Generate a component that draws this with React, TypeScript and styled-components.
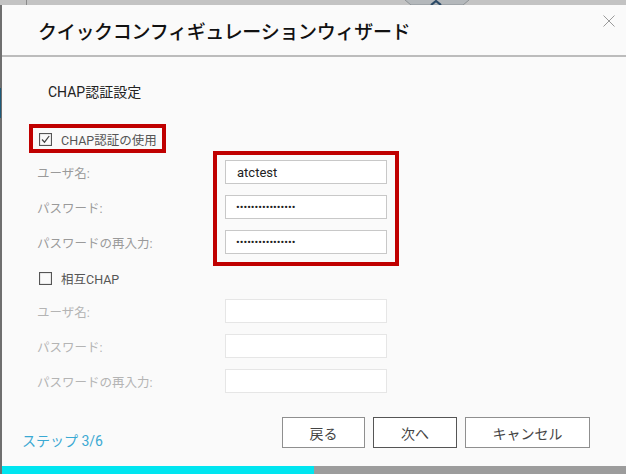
import React from 'react';
import styled, { createGlobalStyle } from 'styled-components';

const GlobalStyle = createGlobalStyle`
    html, body {
        margin: 0;
        padding: 0;
        width: 626px;
        height: 474px;
        overflow: hidden;
    }

    body {
        font-family: Roboto, 'Noto Sans CJK JP', sans-serif;
    }
`;

interface IRowProps {
    disabled?: boolean;
}

interface ICheckProps {
    checked?: boolean;
}

interface IButtonProps {
    primary?: boolean;
}

const chapRows = [
    { label: 'ユーザ名:', value: 'atctest', secret: false },
    { label: 'パスワード:', value: '••••••••••••••••', secret: true },
    { label: 'パスワードの再入力:', value: '••••••••••••••••', secret: true },
];

const mutualRows = ['ユーザ名:', 'パスワード:', 'パスワードの再入力:'];

const CheckBox: React.FC<ICheckProps> = ({ checked }) => (
    <svg width='13' height='13' viewBox='0 0 13 13'>
        <rect x='0.5' y='0.5' width='12' height='12' fill='none' stroke='#555' strokeWidth='1.2' />
        {checked && <path d='M3 6.5 L5.5 9.2 L10.2 3' fill='none' stroke='#444' strokeWidth='1.2' />}
    </svg>
);

const App: React.FC = () => {
    return (
        <Backdrop>
            <GlobalStyle />
            <TopStrip>
                <svg width='70' height='5' viewBox='0 0 70 5'>
                    <path d='M2 0 L8 5 L60 5 L66 0' fill='#b4b8bb' stroke='#8d9296' strokeWidth='1' />
                    <path d='M28 5 L33 1 L38 5' fill='none' stroke='#2b4a66' strokeWidth='2.2' />
                </svg>
            </TopStrip>
            <Dialog>
                <Header>
                    <Title>クイックコンフィギュレーションウィザード</Title>
                    <Close>
                        <svg width='12' height='12' viewBox='0 0 12 12'>
                            <path d='M0.5 0.5 L11.5 11.5 M11.5 0.5 L0.5 11.5' stroke='#9a9a9a' strokeWidth='1' />
                        </svg>
                    </Close>
                </Header>
                <Body>
                    <SectionTitle>CHAP認証設定</SectionTitle>
                    <CheckRow>
                        <CheckBox checked />
                        <span>CHAP認証の使用</span>
                        <Highlight style={{ left: -10, top: -5, width: 137, height: 29 }} />
                    </CheckRow>
                    <FieldGroup>
                        {chapRows.map((row) => (
                            <FieldRow key={row.label}>
                                <Label>{row.label}</Label>
                                <Input secret={row.secret}>{row.value}</Input>
                            </FieldRow>
                        ))}
                        <Highlight style={{ left: 176, top: -9, width: 186, height: 115 }} />
                    </FieldGroup>
                    <MutualRow>
                        <CheckBox />
                        <span>相互CHAP</span>
                    </MutualRow>
                    <FieldGroup>
                        {mutualRows.map((label) => (
                            <FieldRow key={label}>
                                <Label disabled>{label}</Label>
                                <Input disabled />
                            </FieldRow>
                        ))}
                    </FieldGroup>
                </Body>
                <Footer>
                    <Step>ステップ 3/6</Step>
                    <Buttons>
                        <Button style={{ width: 83 }}>戻る</Button>
                        <Button primary style={{ width: 84 }}>
                            次へ
                        </Button>
                        <Button style={{ width: 125 }}>キャンセル</Button>
                    </Buttons>
                </Footer>
                <Progress>
                    <ProgressFill style={{ width: '50%' }} />
                </Progress>
            </Dialog>
        </Backdrop>
    );
};

const Backdrop = styled.div`
    display: flex;
    flex-direction: column;

    width: 626px;
    height: 474px;

    background:
        linear-gradient(to bottom, transparent 88px, #1d5a79 88px, #1d5a79 118px, transparent 118px) left / 1px 100% no-repeat,
        linear-gradient(to bottom, #c3c3c3 0, #c3c3c3 5px, #6f6f6f 5px);
    box-sizing: border-box;
`;

const TopStrip = styled.div`
    display: flex;
    justify-content: flex-start;

    height: 5px;
    padding-left: 403px;

    background: linear-gradient(to right, #c3c3c3 26px, #8a8a8a 26px, #8a8a8a 27px, #c3c3c3 27px);
`;

const Dialog = styled.div`
    flex: 1;

    display: flex;
    flex-direction: column;

    margin-left: 2px;

    background-color: #fafafa;
`;

const Header = styled.div`
    position: relative;

    display: flex;
    align-items: center;

    height: 50px;
    padding-left: 36px;

    border-bottom: 2px solid #bcbcbc;
`;

const Title = styled.h1`
    margin: 0;

    font-family: 'Noto Sans CJK JP', sans-serif;
    font-size: 19px;
    font-weight: 500;
    letter-spacing: -0.3px;
    color: #111;
`;

const Close = styled.div`
    position: absolute;
    top: 10px;
    right: 11px;

    display: flex;
`;

const Body = styled.div`
    display: flex;
    flex-direction: column;

    padding-left: 35px;
`;

const SectionTitle = styled.div`
    margin: 25px 0 0 11px;

    font-size: 14px;
    line-height: 20px;
    color: #222;
`;

const CheckRow = styled.div`
    position: relative;

    display: flex;
    align-items: center;
    gap: 9px;

    width: fit-content;
    height: 20px;
    margin: 27px 0 0 2px;

    font-size: 12.5px;
    color: #555;
`;

const MutualRow = styled(CheckRow)`
    margin-top: 14px;
`;

const Highlight = styled.div`
    position: absolute;

    border: 4px solid #c00000;
    box-sizing: border-box;
    pointer-events: none;
`;

const FieldGroup = styled.div`
    position: relative;

    display: flex;
    flex-direction: column;
    gap: 11px;

    width: fit-content;
    margin-top: 11px;
`;

const FieldRow = styled.div`
    display: grid;
    grid-template-columns: 188px 162px;
    align-items: center;
`;

const Label = styled.span<IRowProps>`
    font-size: 12.5px;
    color: ${(props) => (props.disabled ? '#b4b4b4' : '#9a9a9a')};
`;

const Input = styled.div<{ disabled?: boolean; secret?: boolean }>`
    display: flex;
    align-items: center;

    height: 24px;
    padding-left: ${(props) => (props.secret ? '10px' : '11px')};

    background-color: #fff;
    border: 1px solid ${(props) => (props.disabled ? '#e6e6e6' : '#c8c8c8')};
    box-sizing: border-box;

    font-size: ${(props) => (props.secret ? '11px' : '13px')};
    color: #222;
`;

const Footer = styled.div`
    display: flex;
    align-items: flex-end;
    justify-content: space-between;

    margin-top: 24px;
    padding: 0 36px 0 20px;
`;

const Step = styled.div`
    margin-bottom: -3px;

    font-size: 14px;
    line-height: 20px;
    color: #3aa9d3;
`;

const Buttons = styled.div`
    display: flex;
    gap: 8px;
`;

const Button = styled.button<IButtonProps>`
    height: 31px;

    background-color: #fff;
    border: 1px solid ${(props) => (props.primary ? '#555' : '#8f8f8f')};
    border-radius: 0;

    font-family: Roboto, 'Noto Sans CJK JP', sans-serif;
    font-size: 14px;
    color: #444;

    cursor: pointer;
`;

const Progress = styled.div`
    display: flex;

    height: 8px;
    margin-top: auto;

    background-color: #9c9c9c;
`;

const ProgressFill = styled.div`
    background-color: #00e5f0;
`;

export default App;
